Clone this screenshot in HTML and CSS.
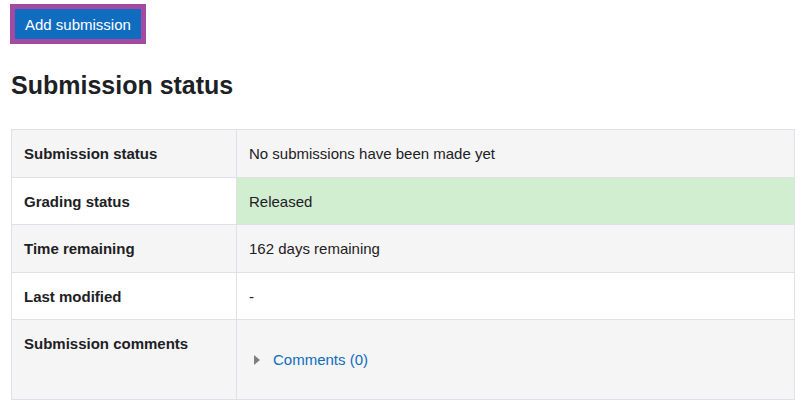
FILE: index.html
```html
<!DOCTYPE html>
<html lang="en">
<head>
<meta charset="utf-8">
<title>Submission status</title>
<link rel="stylesheet" href="styles.css">
</head>
<body>
<div class="page">
  <div class="actions">
    <button class="btn-primary" type="button">Add submission</button>
  </div>
  <h3 class="heading">Submission status</h3>
  <table class="status-table">
    <tbody>
      <tr class="row-grey">
        <th>Submission status</th>
        <td>No submissions have been made yet</td>
      </tr>
      <tr class="row-white">
        <th>Grading status</th>
        <td class="success">Released</td>
      </tr>
      <tr class="row-grey">
        <th>Time remaining</th>
        <td>162 days remaining</td>
      </tr>
      <tr class="row-white">
        <th>Last modified</th>
        <td>-</td>
      </tr>
      <tr class="row-grey">
        <th>Submission comments</th>
        <td>
          <div class="comments">
            <span class="caret"></span>
            <a href="#" class="comments-link">Comments (0)</a>
          </div>
        </td>
      </tr>
    </tbody>
  </table>
</div>
</body>
</html>
```
FILE: styles.css
```css
html, body {
  margin: 0;
  padding: 0;
  background: #ffffff;
}
body {
  font-family: "Liberation Sans", Arial, sans-serif;
  font-size: 15px;
  line-height: 22.5px;
  color: #1d2125;
}
.page {
  padding: 0 8px 0 11px;
}
.actions {
  padding: 9px 0 0 4px;
  height: 30px;
}
.btn-primary {
  display: block;
  height: 30px;
  padding: 0 10px;
  border: 0;
  background: #0f6cbf;
  color: #ffffff;
  font-family: inherit;
  font-size: 15px;
  line-height: 31px;
  outline: 5px solid #a34aa2;
  cursor: pointer;
}
.heading {
  margin: 32px 0 30px 0;
  font-size: 25px;
  font-weight: 700;
  line-height: 28px;
}
.status-table {
  width: 100%;
  border-collapse: collapse;
  border: 1px solid #dee2e6;
}
.status-table th,
.status-table td {
  border-top: 1px solid #dee2e6;
  padding: 13px 12px 11px 12px;
  text-align: left;
  vertical-align: top;
  line-height: 22.5px;
}
.status-table th {
  width: 200px;
  font-weight: 700;
  border-right: 1px solid #dee2e6;
}
.row-grey { background: #f5f5f5; }
.row-white { background: #ffffff; }
.status-table td.success { background: #d1eed0; }
.comments {
  display: flex;
  align-items: center;
  padding: 16px 0 16px 5px;
}
.caret {
  width: 0;
  height: 0;
  border-top: 5px solid transparent;
  border-bottom: 5px solid transparent;
  border-left: 6px solid #7f7f7f;
  margin-right: 13px;
}
.comments-link {
  color: #0f6cbf;
  text-decoration: none;
}
```
